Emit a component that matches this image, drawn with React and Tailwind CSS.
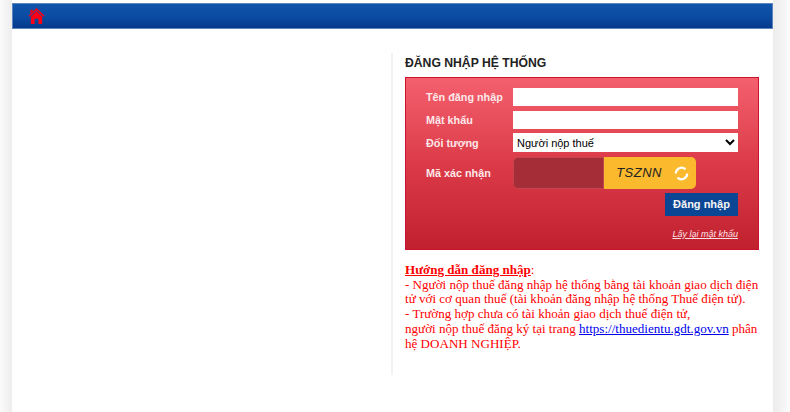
import React from 'react';

function HomeIcon() {
  return (
    <svg width="17" height="18" viewBox="0 0 18 18" fill="#fb0014">
      <path d="M9 0.5 L17.5 8.8 L16.4 9.9 L9 2.8 L1.6 9.9 L0.5 8.8 Z" />
      <path d="M2.5 2.5 H5 V4 L2.5 6.5 Z" />
      <path d="M9 3.8 L15 9.5 V17.5 H11 V12 H7 V17.5 H3 V9.5 Z" />
    </svg>
  );
}

function RefreshIcon() {
  return (
    <svg width="15" height="15" viewBox="0 0 15 15" fill="none" stroke="#fff" strokeWidth="2.2">
      <path d="M1.8 7.5 A5.7 5.7 0 0 1 11.5 3.4" />
      <path d="M13.2 7.5 A5.7 5.7 0 0 1 3.5 11.6" />
    </svg>
  );
}

export default function App() {
  return (
    <div className="flex h-[412px] w-[790px] overflow-hidden bg-white font-['Liberation_Sans',Arial,sans-serif]">
      <div className="w-[12px] shrink-0 bg-gradient-to-r from-[#fbfbfb] to-[#ededed]" />
      <div className="w-[761px] shrink-0 bg-white pt-[3px]">
        {/* Thanh menu */}
        <div className="flex h-[26px] items-center border border-[#5b86bd] bg-gradient-to-b from-[#0f55ab] via-[#0b4ca3] to-[#053a8c] pl-[15px]">
          <HomeIcon />
        </div>

        <div className="flex pt-[24px]">
          <div className="w-[379px] shrink-0" />

          {/* Khung đăng nhập */}
          <div className="h-[322px] w-[368px] border-l-2 border-[#f2f2f2] pl-[12px]">
            <h2 className="mt-[1px] text-[12.2px] leading-[18px] font-bold text-[#222]">ĐĂNG NHẬP HỆ THỐNG</h2>

            <form className="mt-[5px] h-[173px] w-[354px] border border-[#c9142b] bg-gradient-to-b from-[#f4606e] via-[#dc3a48] to-[#c1202f] pt-[7px] pr-[20px] pl-[20px]">
              <div className="flex h-[23px] items-center">
                <label className="w-[87px] pt-[1px] text-[10.8px] font-bold text-[#fde8ea]">Tên đăng nhập</label>
                <input type="text" className="h-[18px] w-[225px] bg-white" />
              </div>
              <div className="flex h-[23px] items-center">
                <label className="w-[87px] pt-[1px] text-[10.8px] font-bold text-[#fde8ea]">Mật khẩu</label>
                <input type="password" className="h-[18px] w-[225px] bg-white" />
              </div>
              <div className="flex h-[23px] items-center">
                <label className="w-[87px] pt-[1px] text-[10.8px] font-bold text-[#fde8ea]">Đối tượng</label>
                <select className="h-[19px] w-[225px] bg-white pl-0 text-[11px] text-black">
                  <option>Người nộp thuế</option>
                </select>
              </div>
              <div className="mt-[3px] flex items-center">
                <label className="w-[87px] text-[10.8px] font-bold text-[#fde8ea]">Mã xác nhận</label>
                <div className="flex h-[32px] w-[183px] overflow-hidden rounded-[5px]">
                  <div className="w-[91px] rounded-l-[5px] border border-[#c2454f] bg-[#a52d38]" />
                  <div className="flex flex-1 items-center justify-end gap-[12px] bg-[#fbb92e] pr-[7px]">
                    <span className="text-[13px] tracking-[0.5px] text-[#222] italic">TSZNN</span>
                    <RefreshIcon />
                  </div>
                </div>
              </div>
              <div className="mt-[4px] flex justify-end">
                <button type="button" className="h-[23px] w-[73px] bg-[#0b4695] text-[11px] font-bold text-[#f4f4f4]">Đăng nhập</button>
              </div>
              <div className="mt-[12px] flex justify-end">
                <a href="#" className="text-[9px] leading-[12px] text-[#fbe3e5] italic underline">Lấy lại mật khẩu</a>
              </div>
            </form>

            <div className="mt-[13px] w-[357px] font-['Liberation_Serif','Times_New_Roman',serif] text-[13.07px] leading-[14.7px] text-[#ff0000]">
              <b><u>Hướng dẫn đăng nhập</u></b>:
              <br />- Người nộp thuế đăng nhập hệ thống bằng tài khoản giao dịch điện tử với cơ quan thuế (tài khoản đăng nhập hệ thống Thuế điện tử).
              <br />- Trường hợp chưa có tài khoản giao dịch thuế điện tử,
              <br />người nộp thuế đăng ký tại trang <a href="#" className="text-[#0000ee] underline">https://thuedientu.gdt.gov.vn</a> phân hệ DOANH NGHIỆP.
            </div>
          </div>
        </div>
      </div>
      <div className="flex-1 bg-gradient-to-r from-[#ececec] to-[#fbfbfb]" />
    </div>
  );
}
